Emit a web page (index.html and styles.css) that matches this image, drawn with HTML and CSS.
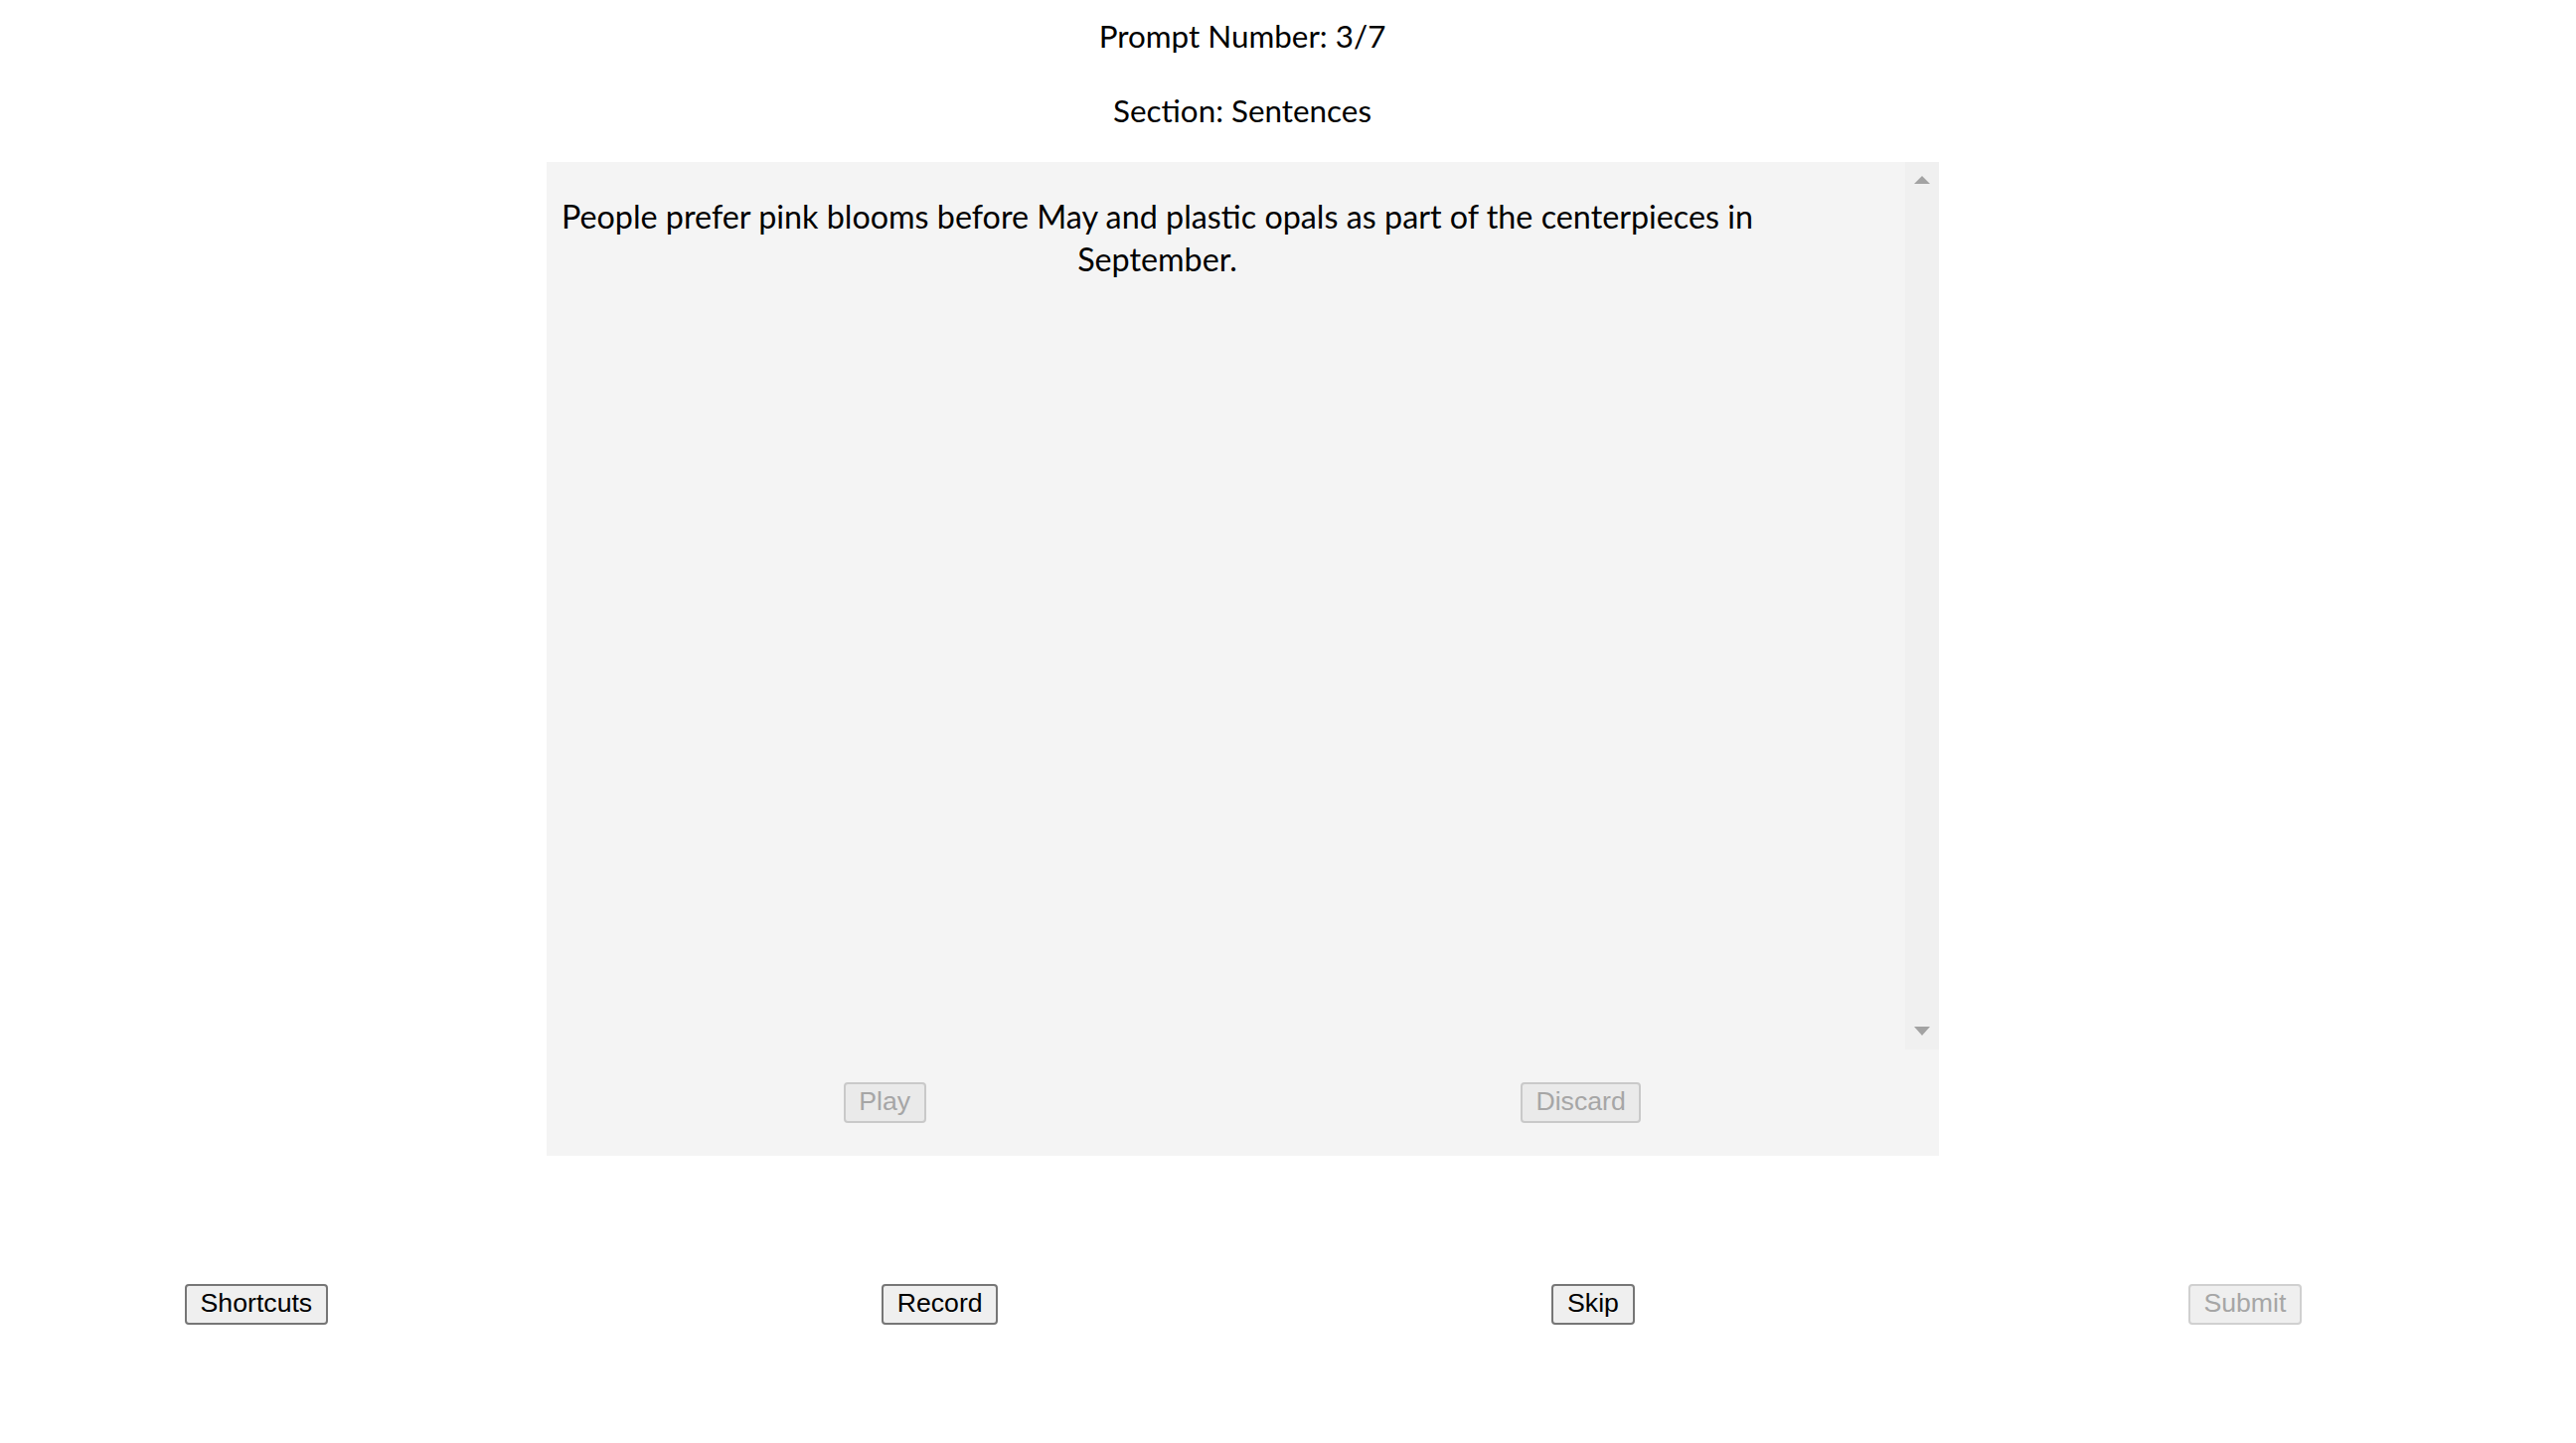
FILE: index.html
```html
<!DOCTYPE html>
<html lang="en">
<head>
<meta charset="utf-8">
<title>Prompt</title>
<link rel="stylesheet" href="styles.css">
</head>
<body>
<div class="page">
  <div class="title">Prompt Number: 3/7</div>
  <div class="title section">Section: Sentences</div>
  <div class="panel">
    <div class="scroller">
      <div class="content">
        <p class="prompt">People prefer pink blooms before May and plastic opals as part of the centerpieces in September.</p>
      </div>
      <div class="scrollbar">
        <span class="arrow up"></span>
        <span class="arrow down"></span>
      </div>
    </div>
    <div class="panel-actions">
      <button class="btn" disabled>Play</button>
      <button class="btn" disabled>Discard</button>
    </div>
  </div>
  <div class="actions">
    <button class="btn">Shortcuts</button>
    <button class="btn">Record</button>
    <button class="btn">Skip</button>
    <button class="btn submit" disabled>Submit</button>
  </div>
</div>
</body>
</html>
```
FILE: styles.css
```css
html, body {
  margin: 0;
  padding: 0;
  background: #ffffff;
}
body {
  font-family: "Lato", "Noto Sans", sans-serif;
  color: #000000;
}
.page {
  width: 2500px;
  padding-top: 16px;
  display: flex;
  flex-direction: column;
  align-items: center;
}
.title {
  font-size: 31.4px;
  line-height: 40px;
  text-align: center;
}
.section {
  margin-top: 35px;
}
.panel {
  margin-top: 32px;
  width: 1401px;
  height: 1000px;
  background: #f4f4f4;
  display: flex;
  flex-direction: column;
}
.scroller {
  height: 893px;
  display: flex;
}
.content {
  flex: 1;
  padding: 33px 0 0 10px;
}
.prompt {
  margin: 0;
  width: 1210px;
  font-size: 32.3px;
  line-height: 43px;
  text-align: center;
}
.scrollbar {
  width: 34px;
  background: #f0f0f0;
  display: flex;
  flex-direction: column;
  justify-content: space-between;
  align-items: center;
  padding: 14px 0;
  box-sizing: border-box;
}
.arrow {
  width: 0;
  height: 0;
  border-left: 8px solid transparent;
  border-right: 8px solid transparent;
}
.arrow.up {
  border-bottom: 8px solid #a3a3a3;
}
.arrow.down {
  border-top: 9px solid #a3a3a3;
}
.panel-actions {
  flex: 1;
  display: flex;
  justify-content: space-around;
  align-items: center;
}
.btn {
  font-family: "Liberation Sans", Arial, sans-serif;
  font-size: 26.67px;
  height: 41px;
  box-sizing: border-box;
  padding: 2px 13.6px 4px;
  border: 2px solid #767676;
  border-radius: 4px;
  background: #efefef;
  color: #000000;
  line-height: normal;
  margin: 0;
}
.btn:disabled {
  border-color: #c9c9c9;
  background: #eaeaea;
  color: #a6a6a6;
}
.btn.submit:disabled {
  background: #efefef;
  border-color: #d0d0d0;
}
.actions {
  margin-top: 129px;
  align-self: stretch;
  display: flex;
  justify-content: space-between;
  padding: 0 184px 0 186px;
}
```
